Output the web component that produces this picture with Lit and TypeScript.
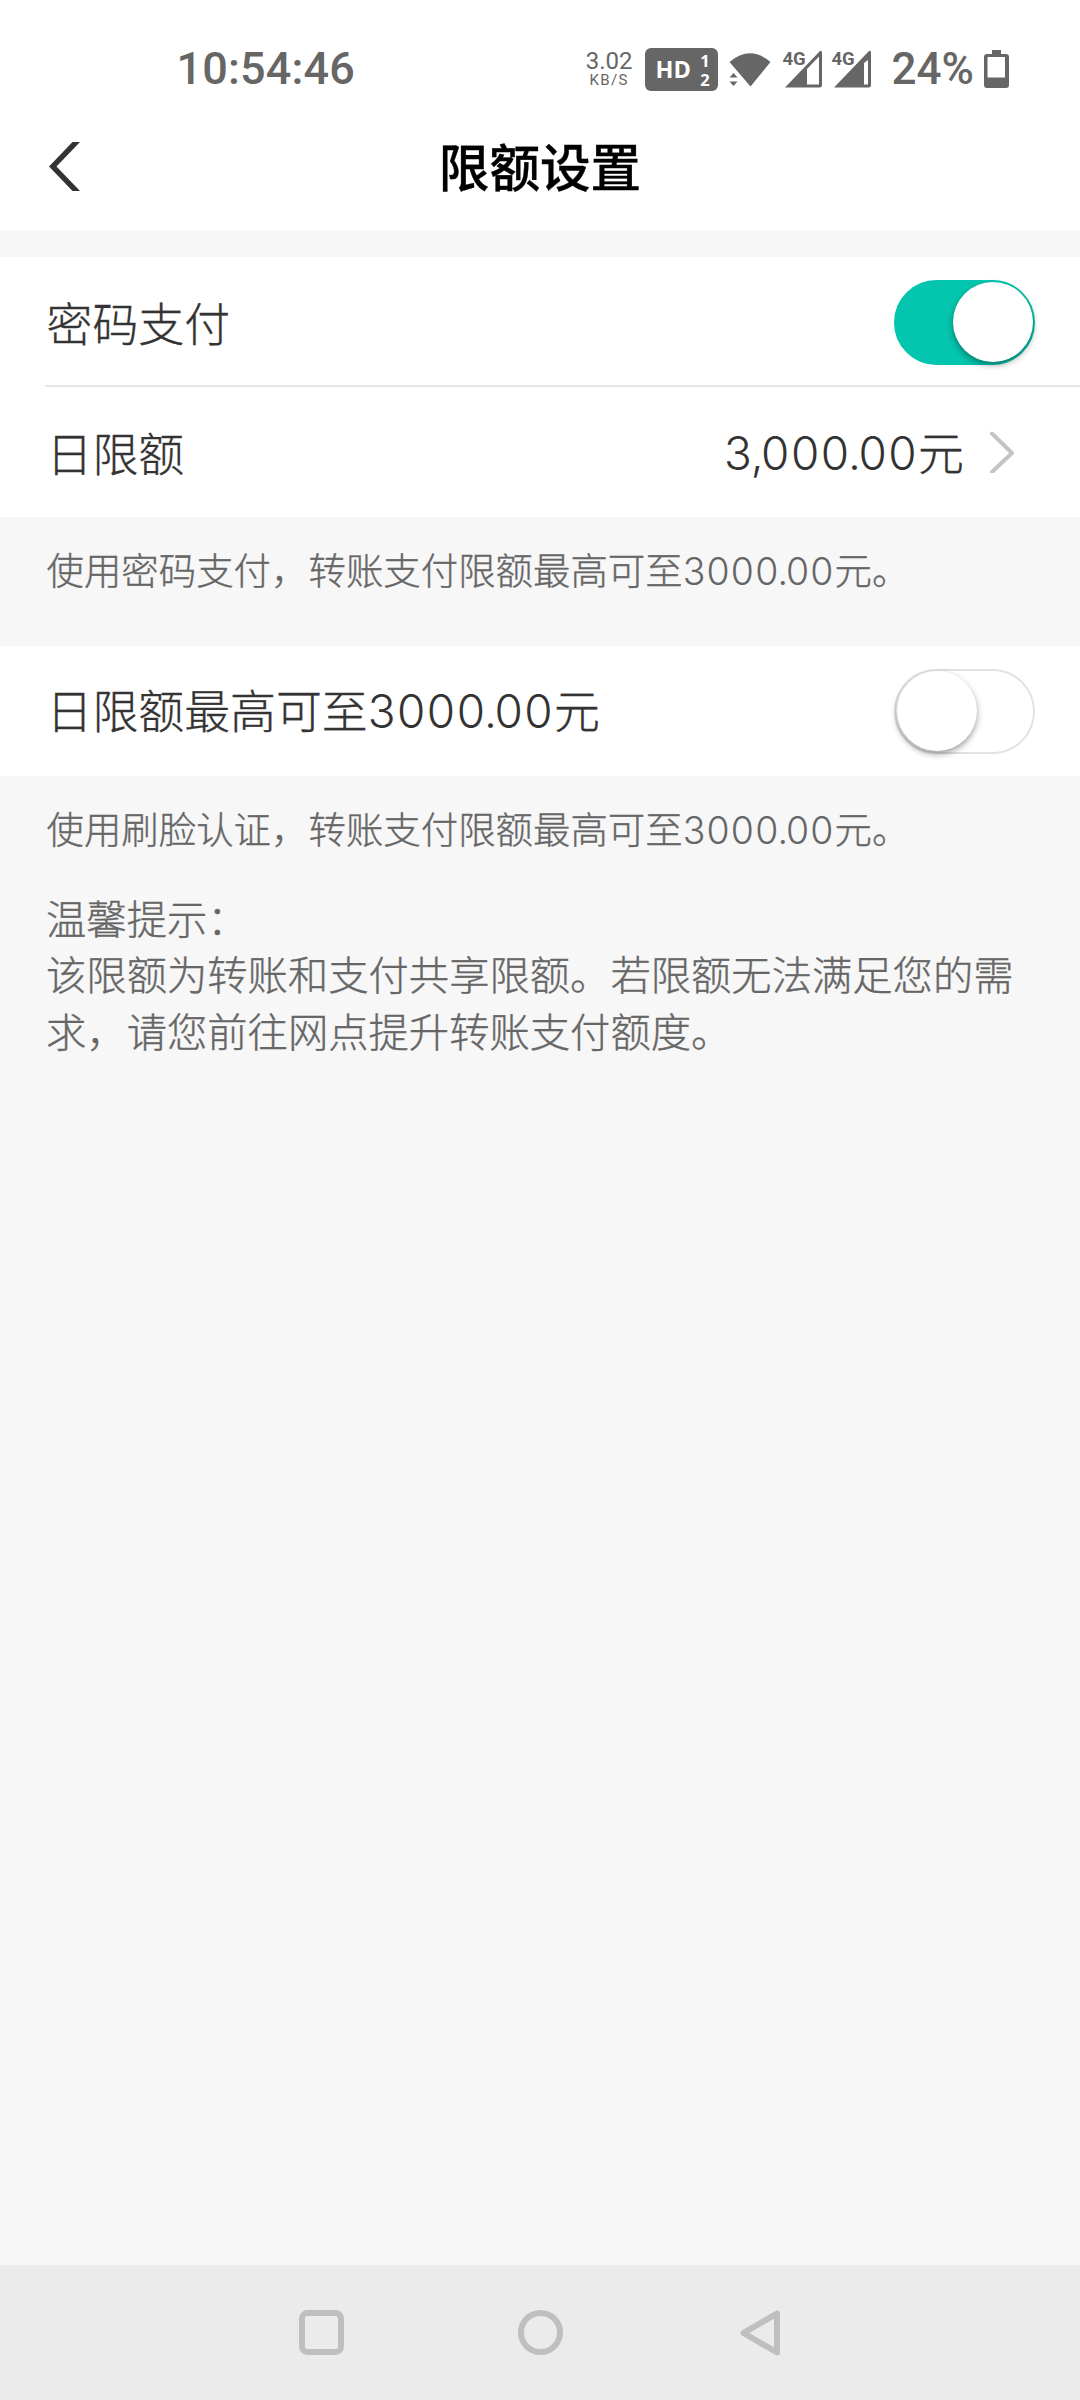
import { LitElement, html, svg, css } from "lit";
import { customElement, property } from "lit/decorators.js";

/** Text whose figures use the wide, light numeral face. */
const withFigures = (text: string) =>
  text
    .split(/([\d.,]+)/)
    .filter((part) => part !== "")
    .map((part) =>
      /^[\d.,]+$/.test(part)
        ? html`<span class="fig">${part.split(/([.,])/).map((p) => (/[.,]/.test(p) ? html`<span class="sep">${p}</span>` : p))}</span>`
        : part
    );

const figures = css`
  .fig {
    font-family: Inter, "Liberation Sans", sans-serif;
    font-weight: 300;
    letter-spacing: 0.032em;
    -webkit-text-stroke: 0;
  }
  .sep {
    margin-left: -0.055em;
    letter-spacing: -0.055em;
  }
`;

@customElement("toggle-switch")
export class ToggleSwitch extends LitElement {
  @property({ type: Boolean, reflect: true }) on = false;
  static styles = css`
    :host {
      display: block;
      flex: none;
    }
    .track {
      box-sizing: border-box;
      display: flex;
      align-items: center;
      width: 141px;
      height: 85px;
      padding: 0.5px;
      border: 2px solid #e2e2e2;
      border-radius: 43px;
      background: #fff;
    }
    .knob {
      width: 80px;
      height: 80px;
      border-radius: 50%;
      background: #fff;
      box-shadow: 0 3px 6px rgba(0, 0, 0, 0.38);
    }
    :host([on]) .track {
      justify-content: flex-end;
      border-color: #04c5ad;
      background: #04c5ad;
    }
  `;
  render() {
    return html`<div class="track"><div class="knob"></div></div>`;
  }
}

@customElement("status-bar")
export class StatusBar extends LitElement {
  static styles = css`
    :host {
      display: flex;
      box-sizing: border-box;
      height: 104px;
      padding: 35px 71px 0 176.5px;
      color: #666;
      font-family: Roboto, sans-serif;
      font-weight: 400;
      -webkit-text-stroke: 0;
    }
    .clock,
    .percent {
      font-size: 45px;
      line-height: 68px;
      font-weight: 500;
      white-space: nowrap;
    }
    .clock {
      letter-spacing: 0.15px;
    }
    .right {
      display: flex;
      align-items: center;
      height: 68px;
      margin-left: auto;
    }
    .speed {
      display: flex;
      flex-direction: column;
      align-items: center;
      width: 46px;
      margin-right: 12.5px;
    }
    .rate {
      font-size: 24px;
      line-height: 22px;
      height: 22px;
    }
    .unit {
      font-size: 15px;
      line-height: 16px;
      letter-spacing: 1.3px;
    }
    .hd {
      display: flex;
      box-sizing: border-box;
      align-items: center;
      justify-content: space-between;
      width: 73px;
      height: 43px;
      padding: 0 8px 0 11px;
      margin: 1px 11px 0 0;
      border-radius: 6px;
      background: #666;
      color: #fff;
      font-family: "Open Sans", sans-serif;
      font-weight: 700;
    }
    .hd-label {
      font-size: 23.5px;
      line-height: 43px;
    }
    .sims {
      display: flex;
      flex-direction: column;
      font-size: 16.5px;
      line-height: 19px;
    }
    svg {
      display: block;
      flex: none;
      overflow: visible;
    }
    .wifi {
      margin: 1px 11px 0 0;
    }
    .signal {
      margin: 0 9px 0 0;
    }
    .net {
      font: 700 18.5px Roboto, sans-serif;
      fill: #666;
      stroke: #fff;
      stroke-width: 4px;
      paint-order: stroke;
    }
    .percent {
      margin-left: 12px;
      font-size: 44px;
    }
    .battery {
      margin: 0 0 0 10px;
    }
  `;
  private signal(x: number) {
    return html`<svg class="signal" width="40" height="38" viewBox="0 0 40 38">
      <path d="M3 37.5 L38 1 Q40 0 40 3 V35 Q40 37.5 37.500 37.500 Z" fill="#666" />
      ${svg`<path d=${`M${x} ${x === 25 ? 19 : 13} L37 ${x === 25 ? 6.5 : 10} V34.500 H${x} Z`} fill="#fff" />`}
      <text class="net" x="0.500" y="14.500">4G</text>
    </svg>`;
  }
  render() {
    return html`
      <div class="clock">10:54:46</div>
      <div class="right">
        <div class="speed"><span class="rate">3.02</span><span class="unit">KB/S</span></div>
        <div class="hd">
          <span class="hd-label">HD</span>
          <span class="sims"><span>1</span><span>2</span></span>
        </div>
        <svg class="wifi" width="42" height="34" viewBox="0 0 42 34">
          <path d="M0.500 9 Q21 -8.500 41.500 9 L21.500 33.500 Z" fill="#666" />
          <path d="M0.500 24.500 L4.500 20 L8.500 24.500 Z M0.500 28.500 H8.500 L4.500 33 Z" fill="#666" />
        </svg>
        ${this.signal(25)} ${this.signal(33)}
        <div class="percent">24%</div>
        <svg class="battery" width="25" height="38" viewBox="0 0 25 38">
          <path d="M8 0 H17 V4 H22 Q25 4 25 7 V35 Q25 38 22 38 H3 Q0 38 0 35 V7 Q0 4 3 4 H8 Z M3.500 7 V27.500 H21 V7 Z" fill="#666" fill-rule="evenodd" />
        </svg>
      </div>
    `;
  }
}

@customElement("setting-row")
export class SettingRow extends LitElement {
  @property() label = "";
  static styles = [
    figures,
    css`
      :host {
        display: flex;
        box-sizing: border-box;
        align-items: center;
        justify-content: space-between;
        height: 130px;
        padding: 0 45px 0 46.5px;
        background: #fff;
        color: #333;
        font-size: 45.9px;
        line-height: 64px;
        white-space: nowrap;
      }
      .label {
        padding-bottom: 2px;
      }
      .end {
        display: flex;
        align-items: center;
      }
    `,
  ];
  render() {
    return html`<span class="label">${withFigures(this.label)}</span><span class="end"><slot></slot></span>`;
  }
}

@customElement("app-root")
export class AppRoot extends LitElement {
  static styles = [
    figures,
    css`
      :host {
        display: flex;
        flex-direction: column;
        width: 1080px;
        height: 2400px;
        overflow: hidden;
        background: #f7f7f7;
        font-family: "Noto Sans CJK SC", sans-serif;
        font-weight: 300;
        -webkit-text-stroke: 0.35px currentColor;
      }
      .top {
        height: 230px;
        background: #fff;
      }
      .bar {
        display: grid;
        grid-template-columns: 1fr auto 1fr;
        align-items: center;
        height: 124px;
        padding: 0 49px;
      }
      .title {
        margin: 0;
        padding-bottom: 3px;
        color: #000;
        font-size: 50.6px;
        line-height: 72px;
        font-weight: 500;
      }
      svg {
        display: block;
      }
      .group {
        margin-top: 27px;
      }
      .divider {
        height: 2px;
        margin: -2px 0 0 45px;
        background: #e5e5e5;
        position: relative;
      }
      .value {
        display: flex;
        align-items: center;
        gap: 25px;
        margin-right: 20px;
      }
      .hint {
        box-sizing: border-box;
        height: 129px;
        margin: 0;
        padding: 26px 46.5px 0;
        color: #666;
        font-size: 37.44px;
        line-height: 52px;
        white-space: nowrap;
      }
      .hint.last {
        height: 112.5px;
      }
      .tips {
        padding: 0 46px;
        color: #666;
        font-size: 40.32px;
        line-height: 56.6px;
      }
      .tips p {
        margin: 0;
      }
      .nav {
        display: flex;
        align-items: center;
        justify-content: center;
        gap: 174px;
        height: 135px;
        margin-top: auto;
        background: #ebebeb;
      }
    `,
  ];
  render() {
    return html`
      <header class="top">
        <status-bar></status-bar>
        <div class="bar">
          <svg width="31" height="49" viewBox="0 0 31 49">
            <path d="M0 24.500 L23.500 0 H31 L7.500 24.500 L31 49 H23.500 Z" fill="#333" />
          </svg>
          <h1 class="title">限额设置</h1>
        </div>
      </header>

      <section class="group">
        <setting-row label="密码支付"><toggle-switch on></toggle-switch></setting-row>
        <div class="divider"></div>
        <setting-row label="日限额">
          <span class="value">
            <span>${withFigures("3,000.00元")}</span>
            <svg width="26" height="42" viewBox="0 0 26 42">
              <path d="M3 2.500 L23 22 L3 41" fill="none" stroke="#c4c4c4" stroke-width="4" stroke-linecap="round" stroke-linejoin="round" />
            </svg>
          </span>
        </setting-row>
      </section>
      <p class="hint">${withFigures("使用密码支付，转账支付限额最高可至3000.00元。")}</p>

      <section>
        <setting-row label="日限额最高可至3000.00元"><toggle-switch></toggle-switch></setting-row>
      </section>
      <p class="hint last">${withFigures("使用刷脸认证，转账支付限额最高可至3000.00元。")}</p>

      <div class="tips">
        <p>温馨提示：</p>
        <p>该限额为转账和支付共享限额。若限额无法满足您的需求，请您前往网点提升转账支付额度。</p>
      </div>

      <nav class="nav">
        <svg width="45" height="45" viewBox="0 0 45 45">
          <rect x="3" y="3" width="39" height="39" rx="5.500" fill="none" stroke="#bfbfbf" stroke-width="6" />
        </svg>
        <svg width="45" height="45" viewBox="0 0 45 45">
          <circle cx="22.500" cy="22.500" r="19.500" fill="none" stroke="#bfbfbf" stroke-width="6" />
        </svg>
        <svg width="45" height="46" viewBox="0 0 45 46">
          <path d="M6.500 23 L40 3.500 V42.500 Z" fill="none" stroke="#bfbfbf" stroke-width="6" stroke-linejoin="round" />
        </svg>
      </nav>
    `;
  }
}
